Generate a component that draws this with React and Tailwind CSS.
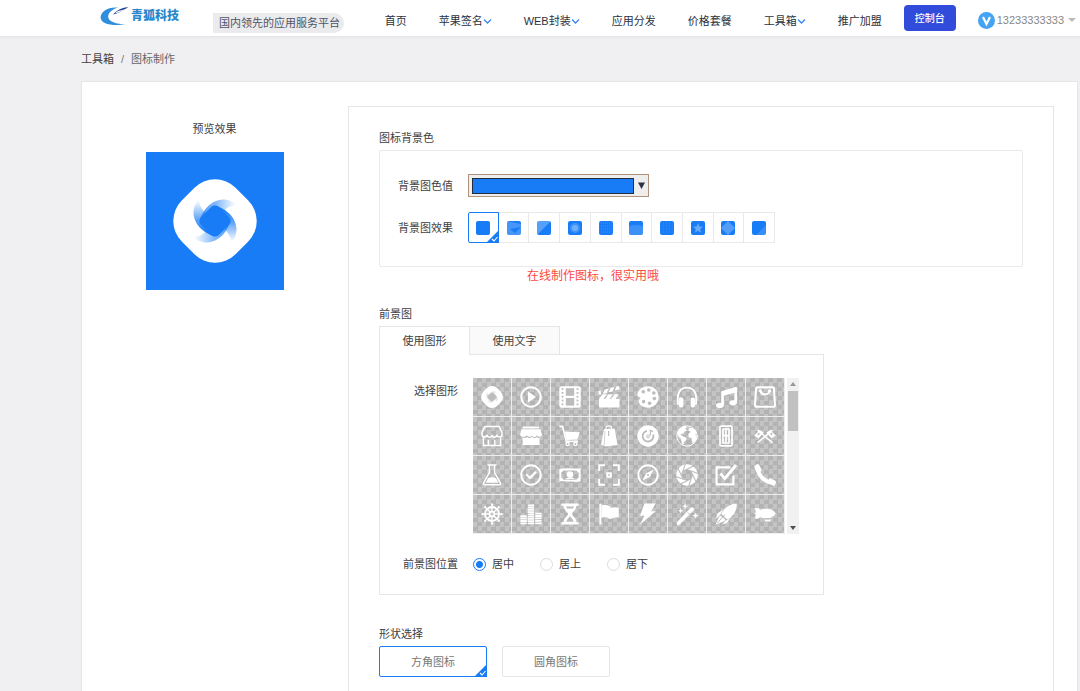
import React, { useState } from 'react';
import { FaMusic } from 'react-icons/fa';

const navItems = [
  { label: '首页' },
  { label: '苹果签名', menu: true },
  { label: 'WEB封装', menu: true },
  { label: '应用分发' },
  { label: '价格套餐' },
  { label: '工具箱', menu: true },
  { label: '推广加盟' },
];

// Colour of the cut-outs inside the solid icons
const HOLE = '#bcbcbc';

const BLADE = 'M-15.5 0 C-13 -9 -5 -21 8 -21.5 C14 -21.5 19 -19 22 -16 C16 -16 11 -13 8 -9 L0 -13 Z';

const Emblem = ({ id, hole, className }) => (
  <svg viewBox="-42 -42 84 84" className={className} aria-hidden="true">
    <defs>
      <linearGradient id={id} gradientUnits="userSpaceOnUse" x1="-12" y1="0" x2="21" y2="0">
        <stop offset="0" stopColor={hole} />
        <stop offset="0.4" stopColor={hole} stopOpacity="0.7" />
        <stop offset="1" stopColor={hole} stopOpacity="0" />
      </linearGradient>
    </defs>
    <rect x="-38" y="-38" width="76" height="76" rx="29" fill="#fff" transform="rotate(45)" />
    <path d={BLADE} fill={`url(#${id})`} opacity="0.75" />
    <path d={BLADE} fill={`url(#${id})`} transform="rotate(90)" />
    <path d={BLADE} fill={`url(#${id})`} transform="rotate(180)" opacity="0.75" />
    <path d={BLADE} fill={`url(#${id})`} transform="rotate(270)" />
    <rect x="-12.5" y="-12.5" width="25" height="25" rx="5" fill={hole} transform="rotate(45)" />
  </svg>
);

const Glyph = ({ children }) => (
  <svg viewBox="0 0 24 24" className="h-6 w-6" fill="#fff" aria-hidden="true">{children}</svg>
);

const Line = ({ children, w = 1.6 }) => (
  <g fill="none" stroke="#fff" strokeWidth={w} strokeLinecap="round" strokeLinejoin="round">{children}</g>
);

const spokes = [0, 45, 90, 135, 180, 225, 270, 315];

const shapes = [
  { name: '标志', icon: <Emblem id="blade-small" hole={HOLE} className="h-[22px] w-[22px]" /> },
  { name: '播放', icon: (
    <Glyph>
      <Line w={2}><circle cx="12" cy="12" r="9.7" /></Line>
      <path d="M9 6.5 L17 12 L9 17.5 Z" />
    </Glyph>
  ) },
  { name: '胶片', icon: (
    <Glyph>
      <rect x="1.3" y="1.3" width="21.4" height="21.4" rx="2.2" />
      <g fill={HOLE}>
        <rect x="7.8" y="3.2" width="8.4" height="7.6" />
        <rect x="7.8" y="13" width="8.4" height="7.6" />
        {[3.2, 7, 10.8, 14.6, 18.4].map(y => (
          <g key={y}>
            <rect x="3.6" y={y} width="1.8" height="1.8" />
            <rect x="18.6" y={y} width="1.8" height="1.8" />
          </g>
        ))}
      </g>
    </Glyph>
  ) },
  { name: '场记板', icon: (
    <Glyph>
      <path d="M2 14 H22.5 V21.5 Q22.5 22.5 21.5 22.5 H3 Q2 22.5 2 21.5 Z" />
      <path d="M2 14 L5.5 9.2 H10 L6.5 14 Z M8 14 L11.5 9.2 H16 L12.5 14 Z M14 14 L17.5 9.2 H22 L18.5 14 Z" />
      <path d="M1.3 6.2 L3.6 5.6 L4.3 9.4 L1.8 9.8 Z M5.6 8.8 L7.8 4.4 L11.6 3.5 L9.6 8 Z M11.6 7.2 L13.8 2.8 L17.6 1.9 L15.6 6.4 Z M17.6 5.6 L19.4 1.5 L22 1 L22.5 4.4 Z" />
    </Glyph>
  ) },
  { name: '调色板', icon: (
    <Glyph>
      <path d="M12 1.3 C18 1.3 22.7 6 22.7 12 C22.7 18 18 22.7 12 22.7 C7.5 22.7 3.6 20.4 2.6 17.3 C1.9 15 4.6 14.4 4.3 12.8 C4 11.4 1.6 12.4 1.4 10.2 C1.6 5.3 6.2 1.3 12 1.3 Z" />
      <g fill={HOLE}>
        <circle cx="7.3" cy="6.8" r="1.8" />
        <circle cx="12.8" cy="5" r="1.8" />
        <circle cx="17.8" cy="8" r="1.8" />
        <circle cx="18.4" cy="13.6" r="1.8" />
        <circle cx="13.6" cy="18.2" r="1.8" />
        <circle cx="7.6" cy="16.6" r="1.8" />
      </g>
    </Glyph>
  ) },
  { name: '耳机', icon: (
    <Glyph>
      <Line w={1.9}><path d="M3 19 C1.6 8 5 2.6 12 2.6 C19 2.6 22.4 8 21 19" /></Line>
      <rect x="4" y="12.5" width="4.4" height="10" rx="1.8" />
      <rect x="15.6" y="12.5" width="4.4" height="10" rx="1.8" />
    </Glyph>
  ) },
  { name: '音乐', icon: <FaMusic className="h-[21px] w-[21px] text-white" aria-hidden="true" /> },
  { name: '购物袋', icon: (
    <Glyph>
      <Line w={2.1}>
        <path d="M4.2 2.4 H19.8 Q20.8 2.4 20.9 3.4 L22 20 Q22 21.8 20.2 21.8 H3.8 Q2 21.8 2 20 L3.1 3.4 Q3.2 2.4 4.2 2.4 Z" />
        <path d="M7.4 5.6 C8.2 10.6 15.8 10.6 16.6 5.6" />
      </Line>
      <circle cx="7.4" cy="5.8" r="1.5" />
      <circle cx="16.6" cy="5.8" r="1.5" />
    </Glyph>
  ) },
  { name: '商店', icon: (
    <Glyph>
      <Line w={1.5}>
        <path d="M5 2.6 H19 L22 8.4 V11 C22 13.8 17.6 13.6 17 11.2 C16.4 13.8 12.4 13.8 12 11.2 C11.6 13.8 7.6 13.8 7 11.2 C6.4 13.6 2 13.8 2 11 V8.4 Z" />
        <path d="M3.4 14.4 V21.4 H20.6 V14.4 M8.4 21 V16.6 M14.8 16.6 V21" />
      </Line>
    </Glyph>
  ) },
  { name: '店铺', icon: (
    <Glyph>
      <path d="M4 2.6 H20 V4.4 H4 Z M2.6 5.2 H21.4 L23 10.4 C23 13.4 18.6 13.4 18 11.2 C17.2 13.6 14 13.6 13 11.2 C12.4 13.4 9 13.4 8 11.2 C7 13.4 1.4 13.6 1 10.4 Z" />
      <path d="M3.6 13.8 C6 14.2 7 14 8.2 13 C9.6 14.4 12 14.2 13 13 C14.6 14.4 16.6 14.2 18 13 C18.8 14 19.6 14 20.6 13.8 V21 H3.6 Z" />
    </Glyph>
  ) },
  { name: '购物车', icon: (
    <Glyph>
      <Line w={1.6}><path d="M2 2.4 H4.6 L8.2 17.4 H19.4" /></Line>
      <path d="M6.6 7.4 L21.8 8.2 L19.4 15.4 L8.6 16 Z" />
      <Line w={1.3}><circle cx="9.6" cy="20" r="1.6" /><circle cx="17.4" cy="20" r="1.6" /></Line>
    </Glyph>
  ) },
  { name: '手提袋', icon: (
    <Glyph>
      <path d="M7 5.2 L17.6 4.6 L20.6 21 L8.6 22.6 L4 20.4 Z" />
      <path d="M8 7 L7.2 21.6" stroke={HOLE} strokeWidth="0.6" />
      <Line w={1.2}><path d="M9 6 V3.6 Q9 1.8 12 1.8 Q14.6 1.8 14.6 4" /></Line>
      <path d="M11.6 7 V12" stroke={HOLE} strokeWidth="1.2" />
    </Glyph>
  ) },
  { name: '唱片', icon: (
    <Glyph>
      <circle cx="12" cy="12" r="10.7" />
      <g fill="none" stroke={HOLE} strokeWidth="1.8">
        <path d="M17.2 10.6 A5.4 5.4 0 1 1 11 6.8" />
        <circle cx="12" cy="12.4" r="1.4" strokeWidth="1" />
      </g>
      <path d="M14.4 11.4 V6.4 L17 7.6" fill="none" stroke={HOLE} strokeWidth="1.2" />
    </Glyph>
  ) },
  { name: '地球', icon: (
    <Glyph>
      <Line w={1}><circle cx="12" cy="12" r="10.2" /></Line>
      <path d="M2 9 C3.4 5 6.6 2.4 10.4 1.8 L12 3.6 L10.2 4.4 L12 6.4 L9.6 7.4 L8.2 9.6 L5.4 10.2 L7.4 12 L11 13.6 L11.4 16 L8.8 18 L8.4 21.6 C6.4 19.6 6.2 17 6 14.8 C4 13.6 3 12 2 9 Z" />
      <path d="M14 4 C17.4 2.8 20.6 5.4 22 9.6 L20.4 10 L22 14 C21 17.4 18.6 19.6 17.4 18.8 L16.6 14.4 L13.6 13 L13.4 9.8 L15.6 8 L13.4 6.4 Z" />
    </Glyph>
  ) },
  { name: '门', icon: (
    <Glyph>
      <Line w={1.7}>
        <rect x="6" y="2.2" width="12" height="19.6" rx="1" />
        <path d="M9 5 H15 V19 H9 Z M12 5 V19 M9 11.6 H15" />
      </Line>
    </Glyph>
  ) },
  { name: '赛旗', icon: (
    <Glyph>
      <Line w={1.4}><path d="M5 6.4 L19 18.4 M19 6.4 L5 18.4" /></Line>
      <path d="M6.6 6 L10.6 8.6 L5.6 14.4 L1.2 11.4 Z M17.4 6 L13.4 8.6 L18.4 14.4 L22.8 11.4 Z" />
      <path d="M4.4 9.6 L6 8.6 L6.8 10.2 L5.2 11.4 Z M19.6 9.6 L18 8.6 L17.2 10.2 L18.8 11.4 Z" fill={HOLE} />
    </Glyph>
  ) },
  { name: '烧瓶', icon: (
    <Glyph>
      <Line w={1.4}><path d="M8 2 H16 M9.4 2 V9.6 L3.6 19.8 Q3 21.8 5 21.8 H19 Q21 21.8 20.4 19.8 L14.6 9.6 V2" /></Line>
      <path d="M8.4 15 Q12 13.4 15.8 15 L18.4 19.8 H5.6 Z" />
    </Glyph>
  ) },
  { name: '完成', icon: (
    <Glyph>
      <Line w={2}><circle cx="12" cy="12" r="9.7" /></Line>
      <Line w={2.4}><path d="M8 12 L11 15 L16.4 9.4" /></Line>
    </Glyph>
  ) },
  { name: '钞票', icon: (
    <Glyph>
      <path fillRule="evenodd" d="M1.4 6 C8 4.4 16 6 22.6 5.4 V18.4 C16 19.4 8 17.8 1.4 18.6 Z M5.6 7.6 L3.2 10 V14.4 L5.6 16.8 H18.4 L20.8 14.4 V10 L18.4 7.6 Z" />
      <circle cx="12" cy="11.6" r="3.4" />
      <path d="M8 15.6 H16" stroke="#fff" />
    </Glyph>
  ) },
  { name: '扫描', icon: (
    <Glyph>
      <g fill="none" stroke="#fff" strokeWidth="1.9">
        <path d="M2.2 8 V2.2 H8 M16 2.2 H21.8 V8 M21.8 16 V21.8 H16 M8 21.8 H2.2 V16" />
        <rect x="10.2" y="10.2" width="3.6" height="3.6" />
      </g>
    </Glyph>
  ) },
  { name: '指南针', icon: (
    <Glyph>
      <Line w={1.9}><circle cx="12" cy="12" r="9.7" /></Line>
      <path d="M17.6 6.4 L13.8 13.8 L6.4 17.6 L10.2 10.2 Z" />
      <circle cx="12" cy="12" r="1.1" fill={HOLE} />
    </Glyph>
  ) },
  { name: '光圈', icon: (
    <Glyph>
      <circle cx="12" cy="12" r="8" fill="none" stroke="#fff" strokeWidth="5.4" />
      {spokes.map(a => (
        <path key={a} d="M6.4 12.6 L10.4 0.6" stroke={HOLE} strokeWidth="1.1" transform={`rotate(${a} 12 12)`} />
      ))}
    </Glyph>
  ) },
  { name: '勾选', icon: (
    <Glyph>
      <g fill="none" stroke="#fff">
        <path d="M16.6 4.4 H2.6 V21.4 H19.4 V12.6" strokeWidth="2.2" />
        <path d="M6.4 10.4 L10.8 15.6 L22 2" strokeWidth="2.8" />
      </g>
    </Glyph>
  ) },
  { name: '电话', icon: (
    <Glyph>
      <Line w={4}><path d="M4.6 7 C6 12.6 11.4 18 17 19.4" /></Line>
      <rect x="2.2" y="1.4" width="5.4" height="8" rx="1.6" transform="rotate(-28 4.9 5.4)" />
      <rect x="14.8" y="16.4" width="8" height="5.4" rx="1.6" transform="rotate(28 18.8 19.1)" />
    </Glyph>
  ) },
  { name: '舵轮', icon: (
    <Glyph>
      <Line w={1.8}>
        <circle cx="12" cy="12" r="7" />
        <circle cx="12" cy="12" r="2.4" />
      </Line>
      {spokes.map(a => (
        <path key={a} d="M12 9.6 V1.6 M10.9 2.2 H13.1" stroke="#fff" strokeWidth="1.4" transform={`rotate(${a} 12 12)`} />
      ))}
    </Glyph>
  ) },
  { name: '金币', icon: (
    <Glyph>
      <g stroke="#fff" strokeWidth="1.9">
        <path d="M1.4 14.2 H7.8 M1.4 16.6 H7.8 M1.4 19 H7.8 M1.4 21.4 H7.8" />
        <path d="M8.8 3.4 H15.2 M8.8 5.6 H15.2 M8.8 7.9 H15.2 M8.8 10.1 H15.2 M8.8 12.4 H15.2 M8.8 14.6 H15.2 M8.8 16.9 H15.2 M8.8 19.1 H15.2 M8.8 21.4 H15.2" />
        <path d="M16.2 11.6 H22.6 M16.2 14 H22.6 M16.2 16.4 H22.6 M16.2 18.9 H22.6 M16.2 21.4 H22.6" />
      </g>
    </Glyph>
  ) },
  { name: '沙漏', icon: (
    <Glyph>
      <path d="M3.4 1.4 H20.6 V3.8 H3.4 Z M3.4 20.2 H20.6 V22.6 H3.4 Z" />
      <path d="M5.4 3 C5.6 8.6 10 10 10 12 C10 14 5.6 15.4 5.4 21 H18.6 C18.4 15.4 14 14 14 12 C14 10 18.4 8.6 18.6 3 Z" />
      <path d="M8.4 19.8 C8.6 17 11.4 15.6 12 14 C12.6 15.6 15.4 17 15.6 19.8 Z M8 4.4 H16 L15 6.6 H9 Z" fill={HOLE} />
    </Glyph>
  ) },
  { name: '旗帜', icon: (
    <Glyph>
      <rect x="2.4" y="1.6" width="2" height="21" rx="1" />
      <path d="M4.4 3.4 C8 2 10.4 3.2 13.4 4.6 V6 C16 5 19 5 21.8 6 V15.6 C18.6 14.4 16.4 16.6 12.6 17 C9.6 14.6 7.6 14.2 4.4 16 Z" />
    </Glyph>
  ) },
  { name: '闪电', icon: (
    <Glyph>
      <path d="M8.4 1.6 H19.6 L15.2 9.2 H19.6 L3.8 22.8 L8.4 13.8 H4 Z" />
    </Glyph>
  ) },
  { name: '魔棒', icon: (
    <Glyph>
      <path d="M1.6 20.6 L15.8 5.6 Q17 4.6 18.4 5.8 Q19.6 7.2 18.4 8.6 L4.2 23 Q2.6 23.4 1.8 22.6 Z" />
      <path d="M12.6 10.4 L14.8 12.4" stroke={HOLE} />
      <path d="M10 1 L10.9 3.4 L13.2 4.2 L10.9 5 L10 7.4 L9.1 5 L6.8 4.2 L9.1 3.4 Z M5.6 6 L6.4 8 L8.2 8.8 L6.4 9.6 L5.6 11.6 L4.8 9.6 L3 8.8 L4.8 8 Z M20.4 10.6 L21.3 12.8 L23.4 13.6 L21.3 14.4 L20.4 16.8 L19.5 14.4 L17.4 13.6 L19.5 12.8 Z" />
    </Glyph>
  ) },
  { name: '火箭', icon: (
    <Glyph>
      <path d="M22.6 1.4 C23 8 20.4 13.6 13.2 17.6 L7.2 12 C10.4 5.4 15.8 1.8 22.6 1.4 Z" />
      <path d="M9 7.6 L3.6 11.4 L2 17 L6.4 12.4 Z M16 16.4 L13 21 L7.8 22.6 L12 18.2 Z" />
      <path d="M6.4 13.6 L11.6 18 L8.4 20 L1.6 22.6 L4.2 16.4 Z" />
      <path d="M3.4 21 L11 12.4" stroke={HOLE} strokeWidth="1" />
    </Glyph>
  ) },
  { name: '飞艇', icon: (
    <Glyph>
      <path d="M1.6 6.2 L5.4 6 L7.4 7.8 C14 5.6 20.6 7 22.8 11.6 C20.6 16.2 13.6 17.4 7.2 15.2 L5 16.8 L1.6 16.6 L3 12.6 L1 11.4 L3 10.2 Z" />
      <path d="M11 17.6 H18 L16.8 19.4 H12.2 Z" />
    </Glyph>
  ) },
];

const effects = [
  { name: '纯色' },
  { name: '光斑', overlay: <path d="M0 0 L14 3 V14 H0 Z M3 8 L8 12 L14 6" fill="#fff" fillOpacity="0.2" /> },
  { name: '斜切', overlay: <path d="M0 0 H14 L0 14 Z" fill="#fff" fillOpacity="0.28" /> },
  { name: '发光', overlay: (
    <>
      <circle cx="7" cy="7" r="5" fill="#fff" fillOpacity="0.18" />
      <circle cx="7" cy="7" r="3" fill="#fff" fillOpacity="0.25" />
    </>
  ) },
  { name: '网纹', overlay: <path d="M0 2 H14 M0 5 H14 M0 8 H14 M0 11 H14" stroke="#fff" strokeOpacity="0.18" strokeDasharray="1 1" /> },
  { name: '渐层', overlay: <path d="M0 5 Q7 3 14 5 V14 H0 Z" fill="#fff" fillOpacity="0.16" /> },
  { name: '点纹', overlay: <path d="M0 2 H14 M0 5 H14 M0 8 H14 M0 11 H14" stroke="#fff" strokeOpacity="0.14" strokeDasharray="1 2" /> },
  { name: '星形', overlay: <path d="M7 2 L8.4 5.6 L12 5.8 L9.2 8.1 L10.2 11.8 L7 9.7 L3.8 11.8 L4.8 8.1 L2 5.8 L5.6 5.6 Z" fill="#fff" fillOpacity="0.35" /> },
  { name: '菱形', overlay: <path d="M7 0 L14 7 L7 14 L0 7 Z" fill="#fff" fillOpacity="0.25" /> },
  { name: '折角', overlay: <path d="M14 4 V14 H4 Z" fill="#fff" fillOpacity="0.14" /> },
];

const CheckCorner = () => (
  <svg viewBox="0 0 13 13" className="absolute -right-px -bottom-px h-[13px] w-[13px]" aria-hidden="true">
    <path d="M13 0 V13 H0 Z" fill="#177cf5" />
    <path d="M6 9 L8 11 L11.5 7" fill="none" stroke="#fff" strokeWidth="1.1" />
  </svg>
);

const Header = () => (
  <header className="flex h-[37px] shrink-0 justify-between border-b border-[#e6e6e8] bg-white pr-1 pl-[100px] shadow-[0_1px_2px_rgba(0,0,0,0.04)]">
    <div className="flex gap-[34px]">
      <a href="#" className="flex h-8 items-center gap-0.5 text-xs font-black text-[#2b87cc]">
        <svg viewBox="0 0 29 20" className="h-5 w-[29px]" aria-hidden="true">
          <path d="M18 1.6 C8 0.6 0.6 5.8 0.6 11.4 C0.6 16.8 9 20.4 26 18.6 C16 18 8.6 15.8 8.2 11 C8 7 12 3.4 18 1.6 Z" fill="#2f8fdc" />
          <path d="M13 8.4 C17 4 22 1.6 28.6 1 C23.6 3.4 21.4 6.6 13 8.4 Z" fill="#1c3f8c" />
          <path d="M17 5.4 C19.6 4.6 22.6 4.2 25 3 C22 6 19 6.2 15 7.4 Z" fill="#fff" />
        </svg>
        青狐科技
      </a>
      <span className="mt-[13px] flex h-5 items-center rounded-tl-[9px] rounded-r-full bg-[#ebebed] pr-1 pl-1.5 text-[#4d5567]">
        国内领先的应用服务平台
      </span>
    </div>
    <div className="flex">
      <nav className="flex h-[42px] items-center gap-8 font-['Liberation_Sans','Noto_Sans_CJK_SC',sans-serif] text-[#2a323e]">
        {navItems.map(item => (
          <a key={item.label} href="#" className="flex items-center whitespace-nowrap">
            {item.label}
            {item.menu && (
              <svg viewBox="0 0 9 8" className="h-2 w-[9px]" aria-hidden="true">
                <path d="M1 2.5 L4.5 6 L8 2.5" fill="none" stroke="#3c86f0" strokeWidth="1.3" />
              </svg>
            )}
          </a>
        ))}
      </nav>
      <button type="button" className="mt-[5px] ml-[22px] h-[26px] w-[52px] rounded bg-[#314bdb] text-[10px] font-medium text-white">
        控制台
      </button>
      <a href="#" className="ml-[22px] flex h-10 items-center text-[#888]">
        <svg viewBox="0 0 17 17" className="mr-0.5 h-[17px] w-[17px]" aria-hidden="true">
          <circle cx="8.5" cy="8.5" r="8.5" fill="#45a3f3" />
          <path d="M5 5 L8.5 12 L12 5" fill="none" stroke="#fff" strokeWidth="2.2" />
        </svg>
        <span className="font-['Liberation_Sans',sans-serif]">13233333333</span>
        <svg viewBox="0 0 8 4" className="ml-1 h-1 w-2" aria-hidden="true">
          <path d="M0 0 H8 L4 4 Z" fill="#bbb" />
        </svg>
      </a>
    </div>
  </header>
);

const tabs = ['使用图形', '使用文字'];
const positions = ['居中', '居上', '居下'];
const corners = ['方角图标', '圆角图标'];

export default function App() {
  const [effect, setEffect] = useState(0);
  const [tab, setTab] = useState(0);
  const [position, setPosition] = useState('居中');
  const [corner, setCorner] = useState(0);

  return (
    <div className="flex min-h-screen flex-col bg-[#f0f0f3] font-['Noto_Sans','Noto_Sans_CJK_SC',sans-serif] text-[11px] leading-[18px] text-[#404040]">
      <Header />
      <main className="flex flex-1 flex-col pr-0.5 pl-[81px]">
        <div className="flex h-11 items-center gap-[7px]">
          <a href="#">工具箱</a>
          <span className="font-['Liberation_Sans',sans-serif] text-[#777]">/</span>
          <span className="text-[#666]">图标制作</span>
        </div>

        <div className="flex flex-1 border border-b-0 border-[#e6e6e8] bg-white pt-6 pr-[23px]">
          <section className="flex w-[265px] shrink-0 flex-col items-center pt-[14px]">
            <h2>预览效果</h2>
            <div className="mt-[14px] flex h-[138px] w-[138px] items-center justify-center bg-[#177cf5]">
              <Emblem id="blade-large" hole="#177cf5" className="h-[84px] w-[84px]" />
            </div>
          </section>

          <div className="ml-px flex-1 border border-b-0 border-[#e6e6e6] px-[30px] pt-[22px] pb-[14px]">
            <h2>图标背景色</h2>
            <section className="mt-[3px] flex flex-col gap-[15px] rounded-xs border border-[#e9e9e9] py-[23px]">
              <div className="flex items-center gap-[15px]">
                <span id="color-label" className="w-[73px] text-right">背景图色值</span>
                <button
                  type="button"
                  aria-labelledby="color-label"
                  className="flex h-[23px] w-[181px] items-center gap-1 border border-[#b0937c] bg-[#eee] px-[3px]"
                >
                  <span className="h-4 w-[162px] border border-[#222d3d] bg-[#177cf5]" />
                  <svg viewBox="0 0 7 7" className="h-[7px] w-[7px]" aria-hidden="true">
                    <path d="M0 0.5 H7 L3.5 7 Z" fill="#2b3340" />
                  </svg>
                </button>
              </div>
              <div className="flex items-center gap-[15px]">
                <span id="effect-label" className="w-[73px] text-right">背景图效果</span>
                <div role="group" aria-labelledby="effect-label" className="grid w-[307px] grid-cols-10">
                  {effects.map((item, i) => (
                    <button
                      key={item.name}
                      type="button"
                      aria-label={item.name}
                      aria-pressed={effect === i}
                      onClick={() => setEffect(i)}
                      className={`relative flex h-[31px] items-center justify-center border ${effect === i ? 'rounded-l-xs border-[#177cf5]' : 'border-[#e9e9e9] not-first:border-l-0'}`}
                    >
                      <svg viewBox="0 0 14 14" className="h-[14px] w-[14px] rounded-xs" aria-hidden="true">
                        <rect width="14" height="14" fill="#177cf5" />
                        {item.overlay}
                      </svg>
                      {effect === i && <CheckCorner />}
                    </button>
                  ))}
                </div>
              </div>
            </section>
            <p className="text-center text-xs leading-[18px] text-[#fb4a42] lg:pr-[216px]">在线制作图标，很实用哦</p>

            <h2 className="mt-5">前景图</h2>
            <div role="tablist" className="relative mt-[3px] -mb-px flex">
              {tabs.map((label, i) => (
                <button
                  key={label}
                  type="button"
                  role="tab"
                  aria-selected={tab === i}
                  onClick={() => setTab(i)}
                  className={`h-[29px] w-[91px] border border-[#e6e6e6] not-first:-ml-px ${tab === i ? 'border-b-white bg-white' : 'bg-[#fafafa]'}`}
                >
                  {label}
                </button>
              ))}
            </div>
            <section className="w-full max-w-[445px] border border-[#e6e6e6] pt-[23px] pb-[21px]">
              <div className="flex gap-[15px]">
                <span id="shape-label" className="mt-1 w-[78px] text-right">选择图形</span>
                <div className="flex">
                  <div role="group" aria-labelledby="shape-label" className="grid grid-cols-8">
                    {shapes.map(shape => (
                      <button
                        key={shape.name}
                        type="button"
                        aria-label={shape.name}
                        className="flex h-[39px] w-[39px] items-center justify-center border-r border-b border-[#eee] bg-[conic-gradient(#b3b3b3_25%,#c4c4c4_0_50%,#b3b3b3_0_75%,#c4c4c4_0)] bg-[length:9px_9px]"
                      >
                        {shape.icon}
                      </button>
                    ))}
                  </div>
                  <div className="ml-0.5 flex w-3 flex-col items-center justify-between bg-[#f1f1f1] py-1">
                    <svg viewBox="0 0 6 4" className="h-1 w-1.5" aria-hidden="true"><path d="M0 4 H6 L3 0 Z" fill="#999" /></svg>
                    <div className="mt-[5px] mb-auto h-10 w-[10px] bg-[#c1c1c1]" />
                    <svg viewBox="0 0 6 4" className="h-1 w-1.5" aria-hidden="true"><path d="M0 0 H6 L3 4 Z" fill="#505050" /></svg>
                  </div>
                </div>
              </div>
              <div className="mt-[21px] flex gap-[15px]">
                <span id="position-label" className="w-[78px] text-right">前景图位置</span>
                <div role="radiogroup" aria-labelledby="position-label" className="flex gap-[26px]">
                  {positions.map(label => (
                    <label key={label} className="flex items-center gap-1.5">
                      <input
                        type="radio"
                        name="position"
                        checked={position === label}
                        onChange={() => setPosition(label)}
                        className="h-[13px] w-[13px] appearance-none rounded-full border border-[#dcdcdc] checked:border-[#177cf5] checked:bg-[radial-gradient(circle,#177cf5_3px,transparent_4px)]"
                      />
                      {label}
                    </label>
                  ))}
                </div>
              </div>
            </section>

            <h2 className="mt-[30px]">形状选择</h2>
            <div className="mt-[3px] flex gap-[15px]">
              {corners.map((label, i) => (
                <button
                  key={label}
                  type="button"
                  aria-pressed={corner === i}
                  onClick={() => setCorner(i)}
                  className={`relative h-[31px] w-[108px] rounded-xs border text-[#777] ${corner === i ? 'border-[#177cf5]' : 'border-[#e6e6e6]'}`}
                >
                  {label}
                  {corner === i && <CheckCorner />}
                </button>
              ))}
            </div>
          </div>
        </div>
      </main>
    </div>
  );
}
